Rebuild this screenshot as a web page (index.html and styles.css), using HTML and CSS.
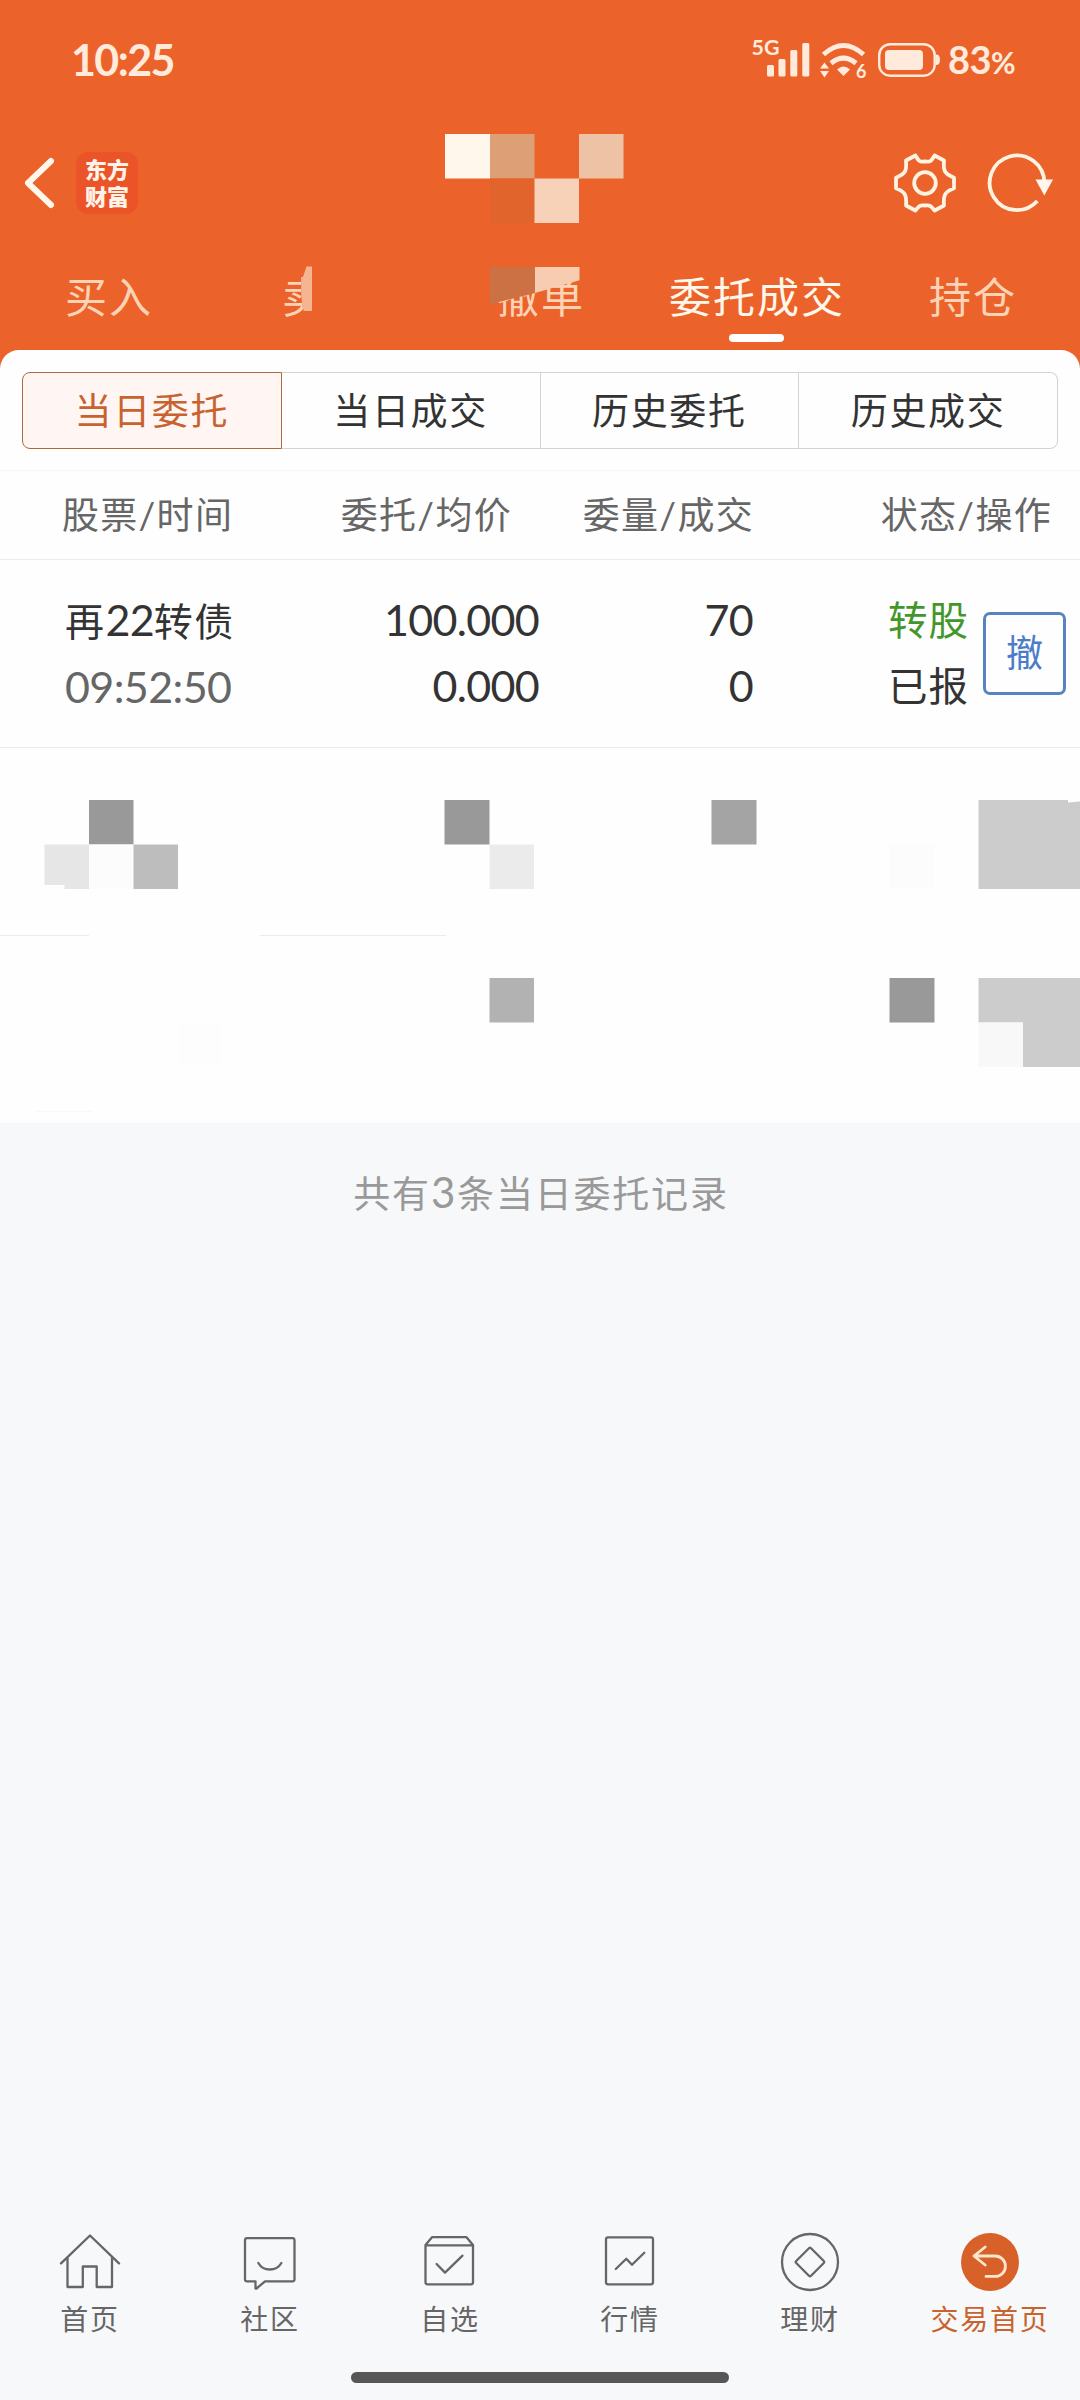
FILE: index.html
```html
<!DOCTYPE html>
<html lang="zh-CN">
<head>
    <meta charset="UTF-8">
    <meta name="viewport" content="width=device-width, initial-scale=1.0">
    <title>委托成交</title>
    <link rel="stylesheet" href="styles.css">
</head>
<body>
    <header class="header">
        <div class="status">
            <span class="clock">10:25</span>
            <div class="status-right">
                <svg class="signals" width="194" height="50" viewBox="748 31 194 50">
                    <text x="751.5" y="54.5" font-size="21.5" textLength="28" lengthAdjust="spacingAndGlyphs">5G</text>
                    <rect x="767" y="65" width="7" height="11.5" rx="1.5"/>
                    <rect x="778.5" y="59" width="7" height="17.5" rx="1.5"/>
                    <rect x="790.3" y="50" width="7" height="26.5" rx="1.5"/>
                    <rect x="802.3" y="43" width="7" height="33.5" rx="1.5"/>
                    <path class="wave" d="M823.5 54.5Q843.5 36.5 863.5 54.5"/>
                    <path class="wave" d="M831 63.2Q843.5 53.2 856 63.2"/>
                    <path d="M837 69.5Q843.5 63.5 850 69.5L843.5 76Z"/>
                    <path d="M820 68.5L824.5 62.5L829 68.5ZM820 71L824.5 77.5L829 71Z"/>
                    <text x="856" y="77.5" font-size="18">6</text>
                    <rect class="line" x="879.2" y="44.2" width="55.5" height="31.5" rx="11"/>
                    <rect x="885" y="50" width="38" height="20" rx="4"/>
                    <path d="M936 54.5Q940 54.5 940 59.8Q940 65 936 65Z"/>
                </svg>
                <span class="percent">83<small>%</small></span>
            </div>
        </div>

        <div class="titlebar">
            <svg class="back" width="32" height="52" viewBox="0 0 32 52">
                <path d="M28 4L5 26L28 48"/>
            </svg>
            <div class="logo">东方<br>财富</div>
            <div class="tools">
                <svg width="66" height="66" viewBox="-33 -33 66 66">
                    <path d="M-9.6-27.500C-5-20-5-21.500 0-21.500C5-21.500 5-20 9.600-27.500L19-22.500C18-11.500 20-9 29-5.300V5.300C20 9 18 11.500 19 22.500L9.600 27.500C5 21.500 5 22.500 0 22.500C-5 22.500-5 21.500-9.600 27.500L-19 22.500C-18 11.500-20 9-29 5.300V-5.300C-20-9-18-11.500-19-22.500Z"/>
                    <circle r="10.8"/>
                </svg>
                <svg width="72" height="66" viewBox="-33 -33 72 66">
                    <path d="M27.3 0A27.3 27.3 0 1 0 20.3 18"/>
                    <path class="solid" d="M18.500-3.500H36L27.300 12.500Z"/>
                </svg>
            </div>
            <!-- 账户名打码 -->
            <svg class="mask-name" width="180" height="90" viewBox="0 0 180 90">
                <rect width="45" height="44.5" fill="#fff7ec"/>
                <rect x="45" width="44.5" height="44.5" fill="#dd9f76"/>
                <rect x="134" width="44.5" height="44.5" fill="#eec3a5"/>
                <rect x="45" y="44.5" width="44.5" height="44.5" fill="#e2642d"/>
                <rect x="89.5" y="44.5" width="44.5" height="44.5" fill="#f7d1b8"/>
            </svg>
        </div>

        <nav class="tabs">
            <div class="tab">买入</div>
            <div class="tab">
                卖<i class="blank"></i>
                <svg class="mask-sell" width="44" height="60" viewBox="299 264 44 60">
                    <path fill="#eb632b" d="M304 264H343V324H305L303.500 310C301 300 300 286 303 277Z"/>
                    <path fill="#f5b590" d="M306.500 266.500H312V311H303.700Q299.500 294 302 280Z"/>
                </svg>
            </div>
            <div class="tab">
                撤单
                <svg class="mask-cancel" width="90" height="40" viewBox="0 0 90 40">
                    <path fill="#cb7144" d="M0 0H45V26L0 37.3Z"/>
                    <path fill="#f8ccb1" d="M45 0H89.5V13.3L45 26Z"/>
                </svg>
            </div>
            <div class="tab active">委托成交</div>
            <div class="tab">持仓</div>
        </nav>
    </header>

    <main class="panel">
        <div class="segment">
            <div class="seg on">当日委托</div>
            <div class="seg">当日成交</div>
            <div class="seg">历史委托</div>
            <div class="seg">历史成交</div>
        </div>

        <div class="thead">
            <span>股票/时间</span>
            <span>委托/均价</span>
            <span>委量/成交</span>
            <span>状态/操作</span>
        </div>

        <div class="order">
            <div class="cell"><span class="name">再<b>22</b>转债</span><span class="time">09:52:50</span></div>
            <div class="cell"><span>100.000</span><span>0.000</span></div>
            <div class="cell"><span>70</span><span>0</span></div>
            <div class="cell state"><span class="green">转股</span><span>已报</span></div>
            <div class="cancel">撤</div>
        </div>

        <!-- 其余两条委托打码 -->
        <svg class="masked" width="1080" height="375" viewBox="0 748 1080 375">
            <path fill="#e6e6e6" d="M44.500 844.500H89V889H64.500V885H44.500Z"/>
            <rect x="89" y="800" width="44.5" height="44.5" fill="#999"/>
            <rect x="89" y="844.5" width="44.5" height="44.5" fill="#fcfcfc"/>
            <rect x="133.5" y="844.5" width="44.5" height="44.5" fill="#bdbdbd"/>
            <rect x="444.5" y="800" width="45" height="44.5" fill="#999"/>
            <rect x="489.5" y="844.5" width="44.5" height="44.5" fill="#ebebeb"/>
            <rect x="711.5" y="800" width="45" height="44.5" fill="#a4a4a4"/>
            <rect x="889.5" y="844.5" width="44.5" height="44.5" fill="#fcfcfc"/>
            <path fill="#ccc" d="M978.500 800H1068V802.500L1080 801.500V889H978.500Z"/>
            <rect y="935" width="89" height="1" fill="#ebebeb"/>
            <rect x="260" y="935" width="186" height="1" fill="#ebebeb"/>
            <rect x="178" y="1023" width="44" height="43" fill="#fdfdfd"/>
            <rect x="489.5" y="978" width="44.5" height="44.5" fill="#b2b2b2"/>
            <rect x="889.5" y="978" width="45" height="44.5" fill="#999"/>
            <path fill="#ccc" d="M978.500 978H1080V1067H1023V1022.500H978.500Z"/>
            <rect x="978.5" y="1022.5" width="44.5" height="44.5" fill="#f8f8f8"/>
            <rect x="36" y="1111" width="56" height="1" fill="#f8f8f8"/>
        </svg>
    </main>

    <p class="total">共有<b>3</b>条当日委托记录</p>

    <nav class="bottom">
        <div class="item">
            <svg width="64" height="64" viewBox="0 0 64 64">
                <path d="M3 33.400L32 5.500L61 33.400M9.500 28V57H24.800V36.500H38.700V57H54V28"/>
            </svg>
            首页
        </div>
        <div class="item">
            <svg width="64" height="64" viewBox="0 0 64 64">
                <path d="M9 8.200H54.500Q56.500 8.200 56.500 10.500V49.300Q56.500 51.300 54.500 51.300H27L18.500 58.500H17.500V51.300H9Q7 51.300 7 49.300V10.500Q7 8.200 9 8.200Z"/>
                <path d="M20.300 33Q24 39.500 31.800 39.500T43.400 33"/>
            </svg>
            社区
        </div>
        <div class="item">
            <svg width="64" height="64" viewBox="0 0 64 64">
                <path d="M7.500 15L14 7.200H48.500L55 15M7.500 15.300H55V52.300Q55 54.300 53 54.300H9.500Q7.500 54.300 7.500 52.300Z"/>
                <path d="M18.600 34L27 42.600L44.500 25.700"/>
            </svg>
            自选
        </div>
        <div class="item">
            <svg width="64" height="64" viewBox="0 0 64 64">
                <rect x="8" y="7.3" width="47" height="47" rx="2"/>
                <path d="M17.800 39L28.300 28.700L34 34.800L46.300 22.700"/>
            </svg>
            行情
        </div>
        <div class="item">
            <svg width="64" height="64" viewBox="0 0 64 64">
                <circle cx="32" cy="32" r="28"/>
                <rect x="21.5" y="21.5" width="21" height="21" rx="1.5" transform="rotate(45 32 32)"/>
            </svg>
            理财
        </div>
        <div class="item current">
            <svg width="64" height="64" viewBox="0 0 64 64">
                <circle class="disc" cx="32" cy="32" r="29"/>
                <path d="M27.200 17L16 26L27.200 35M16 26H37.200A10.200 10.200 0 0 1 37.200 46.400H28"/>
            </svg>
            交易首页
        </div>
    </nav>
    <div class="home-bar"></div>
</body>
</html>
```

FILE: styles.css
```css
* {
    margin: 0;
    padding: 0;
    box-sizing: border-box;
}

body {
    display: flex;
    flex-direction: column;
    width: 1080px;
    height: 2400px;
    overflow: hidden;
    background-color: #f7f8fa;
    color: #333;
    font-family: Lato, "Noto Sans CJK SC", sans-serif;
}

svg {
    display: block;
    flex: none;
}

/* 顶部 */
.header {
    height: 372px;
    background-color: #eb632b;
}

.status {
    display: flex;
    justify-content: space-between;
    height: 122px;
    padding: 31px 63px 0 71px;
    color: #ffeadc;
}

.clock {
    font-size: 43px;
    line-height: 57px;
    font-weight: 700;
    letter-spacing: -1.6px;
}

.status-right {
    display: flex;
}

.signals {
    fill: #ffeadc;
    font-weight: 700;
}

.signals .wave {
    fill: none;
    stroke: #ffeadc;
    stroke-width: 5;
}

.signals .line {
    fill: none;
    stroke: #ffeadc;
    stroke-width: 2.4;
}

.percent {
    width: 69px;
    margin-left: 6px;
    font-size: 38px;
    line-height: 56px;
    font-weight: 700;
    letter-spacing: -0.5px;
    white-space: nowrap;
}

.percent small {
    font-size: 30px;
}

.titlebar {
    position: relative;
    display: flex;
    align-items: center;
    height: 122px;
    padding: 0 21px 0 23px;
}

.back {
    fill: none;
    stroke: #fff7ec;
    stroke-width: 6;
    stroke-linecap: round;
    stroke-linejoin: round;
}

.logo {
    width: 62px;
    height: 62px;
    margin-left: 21px;
    padding-top: 4px;
    border-radius: 12px;
    background-color: #eb5328;
    color: #fff3e8;
    font-size: 22px;
    font-weight: 900;
    line-height: 27px;
    text-align: center;
}

.tools {
    display: flex;
    gap: 26px;
    margin-left: auto;
    margin-right: 3px;
}

.tools svg {
    fill: none;
    stroke: #fff3e2;
    stroke-width: 3.8;
    stroke-linejoin: round;
}

.tools .solid {
    fill: #fff7ec;
    stroke: none;
}

.mask-name {
    position: absolute;
    left: 445px;
    top: 11.5px;
}

.tabs {
    display: grid;
    grid-template-columns: repeat(5, 1fr);
    height: 106px;
}

.tab {
    position: relative;
    padding: 22px 0 0 2px;
    color: #fdd3b6;
    font-size: 42px;
    line-height: 62px;
    letter-spacing: 2px;
    text-align: center;
}

.tab.active {
    color: #fff7ea;
}

.tab.active:after {
    content: "";
    position: absolute;
    left: 81px;
    top: 90px;
    width: 55px;
    height: 8px;
    border-radius: 4px;
    background-color: #fff;
}

.blank {
    display: inline-block;
    width: 42px;
}

.mask-sell {
    position: absolute;
    left: 83px;
    top: 20px;
}

.mask-cancel {
    position: absolute;
    left: 57.5px;
    top: 22.5px;
}

/* 委托列表 */
.panel {
    height: 773px;
    margin-top: -22px;
    padding-top: 22px;
    border-radius: 19px 19px 0 0;
    background-color: #fefefe;
}

.segment {
    display: flex;
    height: 77px;
    margin: 0 22px;
}

.seg {
    flex: 1;
    border: 1px solid #d4d4d4;
    border-left: none;
    font-size: 37px;
    line-height: 75px;
    letter-spacing: 1.7px;
    text-align: center;
}

.seg:last-child {
    border-radius: 0 8px 8px 0;
}

.seg.on {
    border: 1px solid #b0683f;
    border-radius: 8px 0 0 8px;
    background-color: #fff6f3;
    color: #c8632f;
}

.thead {
    display: grid;
    grid-template-columns: 249px 201px 242px 298px;
    height: 90px;
    margin-top: 21px;
    padding-left: 62px;
    border-top: 1px solid #f6f6f6;
    border-bottom: 1px solid #ebebeb;
    color: #666;
    font-size: 37px;
    line-height: 88px;
    letter-spacing: 1.3px;
    text-align: right;
}

.thead span:first-child {
    text-align: left;
}

.order {
    display: grid;
    grid-template-columns: 249px 225px 214px 216px 98px;
    height: 188px;
    padding: 27px 0 0 65px;
    border-bottom: 1px solid #ebebeb;
}

.cell {
    display: flex;
    flex-direction: column;
    font-size: 43px;
    line-height: 66px;
    letter-spacing: -0.7px;
    text-align: right;
}

.cell:first-child {
    text-align: left;
}

.name {
    font-size: 39px;
    letter-spacing: 1.5px;
}

.name b {
    font-size: 43px;
    font-weight: 400;
    letter-spacing: -0.8px;
}

.time {
    color: #666;
    letter-spacing: -0.6px;
}

.state {
    font-size: 39.5px;
    letter-spacing: 1px;
}

.green {
    color: #43962b;
}

.cancel {
    width: 83px;
    height: 83px;
    margin: 25px 0 0 14px;
    border: 3px solid #5883bd;
    border-radius: 7px;
    color: #4b7cc9;
    font-size: 37px;
    line-height: 76px;
    text-align: center;
}

.total {
    margin-top: 39px;
    padding-left: 2px;
    color: #999;
    font-size: 37px;
    line-height: 60px;
    letter-spacing: 1.8px;
    text-align: center;
}

.total b {
    font-size: 42px;
    font-weight: 400;
}

/* 底部导航 */
.bottom {
    display: grid;
    grid-template-columns: repeat(6, 1fr);
    margin-top: auto;
}

.item {
    display: flex;
    flex-direction: column;
    align-items: center;
    height: 142px;
    color: #666;
    font-size: 28px;
    line-height: 50px;
    letter-spacing: 1.8px;
}

.item svg {
    fill: none;
    stroke: #666;
    stroke-width: 2.3;
    stroke-linecap: round;
    stroke-linejoin: round;
}

.item.current {
    color: #c8632f;
}

.item.current svg {
    stroke: #ffe6cc;
    stroke-width: 2.8;
}

.item .disc {
    fill: #d86129;
    stroke: none;
}

.home-bar {
    width: 378px;
    height: 11px;
    margin: 0 auto 17px;
    border-radius: 6px;
    background-color: #575757;
}
```
